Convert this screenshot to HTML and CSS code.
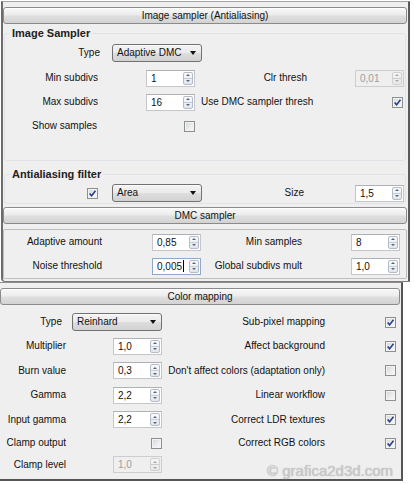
FILE: index.html
```html
<!DOCTYPE html>
<html>
<head>
<meta charset="utf-8">
<link rel="stylesheet" href="styles.css">
</head>
<body>
<div class="top">
  <div class="rollhead">Image sampler (Antialiasing)</div>

  <fieldset class="grp g1">
    <legend>Image Sampler</legend>
    <div class="row is r-type">
      <span class="lbl c1 type-lbl">Type</span>
      <div class="combo is-combo"><span>Adaptive DMC</span><i class="dd"></i></div>
    </div>
    <div class="row is r24 first">
      <span class="lbl c1">Min subdivs</span>
      <span class="spin c3"><span class="val">1</span><span class="arr"><i class="u"></i><i class="d"></i></span></span>
      <span class="lbl c5 right">Clr thresh</span>
      <span class="spin dis c7"><span class="val">0,01</span><span class="arr"><i class="u"></i><i class="d"></i></span></span>
    </div>
    <div class="row is r24">
      <span class="lbl c1">Max subdivs</span>
      <span class="spin c3"><span class="val">16</span><span class="arr"><i class="u"></i><i class="d"></i></span></span>
      <span class="lbl c5 left">Use DMC sampler thresh</span>
      <span class="cb on c7 end"><svg viewBox="0 0 9 9" width="9" height="9"><path d="M1.6 4.4l2 2.3 3.9-5" fill="none" stroke="#263a8c" stroke-width="1.5"/></svg></span>
    </div>
    <div class="row is r24">
      <span class="lbl c1 shift1">Show samples</span>
      <span class="cb c3 end"></span>
    </div>
  </fieldset>

  <fieldset class="grp g2">
    <legend>Antialiasing filter</legend>
    <div class="row is r-filter">
      <span class="cb on c1 end"><svg viewBox="0 0 9 9" width="9" height="9"><path d="M1.6 4.4l2 2.3 3.9-5" fill="none" stroke="#263a8c" stroke-width="1.5"/></svg></span>
      <div class="combo is-combo"><span>Area</span><i class="dd"></i></div>
      <span class="lbl c5 right size-lbl">Size</span>
      <span class="spin c7"><span class="val">1,5</span><span class="arr"><i class="u"></i><i class="d"></i></span></span>
    </div>
  </fieldset>

  <div class="rollhead dmc-head">DMC sampler</div>
  <div class="dmcbox">
    <div class="row dm r24">
      <span class="lbl c1">Adaptive amount</span>
      <span class="spin c3"><span class="val">0,85</span><span class="arr"><i class="u"></i><i class="d"></i></span></span>
      <span class="lbl c4 right">Min samples</span>
      <span class="spin c6"><span class="val">8</span><span class="arr"><i class="u"></i><i class="d"></i></span></span>
    </div>
    <div class="row dm r24">
      <span class="lbl c1">Noise threshold</span>
      <span class="spin focus c3"><span class="val">0,005<b class="caret"></b></span><span class="arr"><i class="u"></i><i class="d"></i></span></span>
      <span class="lbl c4 right">Global subdivs mult</span>
      <span class="spin c6"><span class="val">1,0</span><span class="arr"><i class="u"></i><i class="d"></i></span></span>
    </div>
  </div>
</div>

<div class="cm">
  <div class="rollhead cm-head">Color mapping</div>
  <div class="cmgrid">
    <div class="row cg h24">
      <span class="lbl c1 cm-type">Type</span>
      <div class="combo cm-combo"><span>Reinhard</span><i class="dd"></i></div>
      <span class="lbl c4 right">Sub-pixel mapping</span>
      <span class="cb on c6"><svg viewBox="0 0 9 9" width="9" height="9"><path d="M1.6 4.4l2 2.3 3.9-5" fill="none" stroke="#263a8c" stroke-width="1.5"/></svg></span>
    </div>
    <div class="row cg h24">
      <span class="lbl c1">Multiplier</span>
      <span class="spin c3"><span class="val">1,0</span><span class="arr"><i class="u"></i><i class="d"></i></span></span>
      <span class="lbl c4 right">Affect background</span>
      <span class="cb on c6"><svg viewBox="0 0 9 9" width="9" height="9"><path d="M1.6 4.4l2 2.3 3.9-5" fill="none" stroke="#263a8c" stroke-width="1.5"/></svg></span>
    </div>
    <div class="row cg h25">
      <span class="lbl c1">Burn value</span>
      <span class="spin c3"><span class="val">0,3</span><span class="arr"><i class="u"></i><i class="d"></i></span></span>
      <span class="lbl c4 right">Don't affect colors (adaptation only)</span>
      <span class="cb c6"></span>
    </div>
    <div class="row cg h24">
      <span class="lbl c1">Gamma</span>
      <span class="spin c3"><span class="val">2,2</span><span class="arr"><i class="u"></i><i class="d"></i></span></span>
      <span class="lbl c4 right">Linear workflow</span>
      <span class="cb c6"></span>
    </div>
    <div class="row cg h25">
      <span class="lbl c1">Input gamma</span>
      <span class="spin c3"><span class="val">2,2</span><span class="arr"><i class="u"></i><i class="d"></i></span></span>
      <span class="lbl c4 right">Correct LDR textures</span>
      <span class="cb on c6"><svg viewBox="0 0 9 9" width="9" height="9"><path d="M1.6 4.4l2 2.3 3.9-5" fill="none" stroke="#263a8c" stroke-width="1.5"/></svg></span>
    </div>
    <div class="row cg h22">
      <span class="lbl c1">Clamp output</span>
      <span class="cb c3 end"></span>
      <span class="lbl c4 right">Correct RGB colors</span>
      <span class="cb on c6"><svg viewBox="0 0 9 9" width="9" height="9"><path d="M1.6 4.4l2 2.3 3.9-5" fill="none" stroke="#263a8c" stroke-width="1.5"/></svg></span>
    </div>
    <div class="row cg h21">
      <span class="lbl c1">Clamp level</span>
      <span class="spin dis c3"><span class="val">1,0</span><span class="arr"><i class="u"></i><i class="d"></i></span></span>
    </div>
  </div>
</div>

<div class="watermark">© grafica2d3d.com</div>
</body>
</html>
```

FILE: styles.css
```css
html, body {
  margin: 0;
  padding: 0;
  background: #ffffff;
}
body {
  font-family: "Liberation Sans", Arial, sans-serif;
  font-size: 10px;
  color: #111;
  width: 414px;
  height: 484px;
  overflow: hidden;
}

/* ---------- panels ---------- */
.top {
  margin-top: 1px;
  margin-left: 1px;
  width: 409px;
  box-sizing: border-box;
  border-top: 1px solid #a3a3a3;
  border-left: 2px solid #6c6c6c;
  border-right: 2px solid #5a5a5a;
  border-bottom: 1px solid #7c7c7c;
  border-bottom-left-radius: 4px;
  background: #efefef;
  padding: 5px 0 2px 0;
}

.rollhead {
  height: 17px;
  box-sizing: border-box;
  border: 1px solid #8b8b8b;
  border-radius: 3px;
  background: linear-gradient(#f8f8f8 0%, #ececec 45%, #dedede 55%, #d3d3d3 100%);
  box-shadow: inset 0 1px 0 #ffffff;
  text-align: center;
  line-height: 15px;
  font-size: 10px;
  color: #111;
  margin-right: 1px;
}

.grp {
  margin: 2px 2px 0 1px;
  padding: 0 0 22px 0;
  border: 1px solid #e0e3e7;
  border-radius: 3px;
  min-width: 0;
}
.grp legend {
  margin-left: 5px;
  padding: 0 2px;
  font-weight: bold;
  font-size: 11px;
  line-height: 14px;
  color: #222;
}
.g2 {
  margin-top: 6px;
  padding-bottom: 1px;
}

.dmc-head { margin-top: 3px; }
.dmcbox {
  margin: 5px 1px 0 0;
  border: 1px solid #bdbdbd;
  border-radius: 2px;
}

.cm {
  margin-left: -6px;
  width: 409px;
  box-sizing: border-box;
  border-top: 1px solid #8e8e8e;
  border-right: 2px solid #555;
  border-bottom: 2px solid #555;
  background: #efefef;
  padding: 5px 0 4px 0;
}
.cm-head { margin: 0 1px 0 6px; }
.cmgrid { margin: 5px 0 0 6px; }

/* ---------- rows ---------- */
.row {
  display: grid;
  align-items: center;
}
.is { grid-template-columns: 93px 48px 49px 6px 106px 48px 49px; }
.dm { grid-template-columns: 98px 50px 49px 101px 49px 49px; }
.cg { grid-template-columns: 66px 47px 49px 163px 60px 11px; }

.r-type { height: 22px; margin-top: 2px; }
.r24 { height: 24px; }
.first { margin-top: 2px; }
.r-filter { height: 18px; margin-top: 3px; }
.h24 { height: 24px; }
.h25 { height: 25px; }
.h22 { height: 22px; }
.h21 { height: 21px; }

.c1 { grid-column: 1; grid-row: 1; }
.c3 { grid-column: 3; grid-row: 1; }
.c4 { grid-column: 4; grid-row: 1; }
.c5 { grid-column: 5; grid-row: 1; }
.c6 { grid-column: 6; grid-row: 1; }
.c7 { grid-column: 7; grid-row: 1; }

.lbl {
  white-space: nowrap;
  line-height: 12px;
}
.c1.lbl { justify-self: end; }
.right { justify-self: end; }
.left { grid-column: 5 / 7; justify-self: start; }
.end { justify-self: end; }
.type-lbl { margin-right: -2px; }
.shift1 { margin-right: 1px; }
.size-lbl { margin-right: 3px; }
.cm-type { margin-right: 4px; }
.c7.end { margin-right: 1px; }

/* ---------- combo ---------- */
.combo {
  display: flex;
  align-items: center;
  width: 90px;
  height: 18px;
  box-sizing: border-box;
  border: 1px solid #717171;
  border-radius: 3px;
  background: linear-gradient(#f3f3f3 0%, #ebebeb 48%, #dddddd 52%, #d2d2d2 100%);
  box-shadow: inset 0 1px 0 #fbfbfb;
  padding-left: 4px;
  color: #111;
  line-height: 12px;
}
.is-combo {
  grid-column: 2 / 5;
  grid-row: 1;
  margin-left: 14px;
}
.cm-combo {
  grid-column: 2 / 4;
  grid-row: 1;
  margin-left: 6px;
}
.dd {
  margin-left: auto;
  margin-right: 5px;
  width: 0;
  height: 0;
  border-left: 3px solid transparent;
  border-right: 3px solid transparent;
  border-top: 4px solid #111;
}

/* ---------- spinner ---------- */
.spin {
  display: flex;
  width: 49px;
  height: 17px;
  box-sizing: border-box;
  border: 1px solid #c4c6c9;
  border-top-color: #aeb1b5;
  background: #ffffff;
  color: #111;
}
.spin .val {
  flex: 1;
  padding-left: 4px;
  line-height: 15px;
  white-space: nowrap;
  display: flex;
  align-items: center;
}
.arr {
  width: 10px;
  margin: 1px 1px 1px 0;
  display: flex;
  flex-direction: column;
  box-sizing: border-box;
  border: 1px solid #b3bcc8;
  border-radius: 2px;
  background: linear-gradient(#fafbfc, #e2e6eb);
}
.arr i {
  flex: 1;
  display: flex;
  align-items: center;
  justify-content: center;
}
.arr i + i { border-top: 1px solid #c7cdd5; }
.arr .u::before {
  content: "";
  border-left: 2px solid transparent;
  border-right: 2px solid transparent;
  border-bottom: 2px solid #4f6688;
}
.arr .d::before {
  content: "";
  border-left: 2px solid transparent;
  border-right: 2px solid transparent;
  border-top: 2px solid #4f6688;
}
.spin.dis {
  background: #efefef;
  border-color: #cdcdcd;
  color: #9c9c9c;
}
.spin.dis .arr {
  border-color: #d0d0d0;
  background: linear-gradient(#f5f5f5, #e8e8e8);
}
.spin.dis .arr .u::before { border-bottom-color: #a8a8a8; }
.spin.dis .arr .d::before { border-top-color: #a8a8a8; }
.spin.focus { border-color: #8fa9c8; }
.caret {
  display: inline-block;
  width: 1px;
  height: 12px;
  background: #000;
  margin-left: 1px;
}

/* ---------- checkbox ---------- */
.cb {
  display: flex;
  align-items: center;
  justify-content: center;
  width: 11px;
  height: 11px;
  box-sizing: border-box;
  border: 1px solid #8e8f8f;
  background: linear-gradient(135deg, #d3d6da 0%, #eceef0 60%, #fafafa 100%);
  box-shadow: inset 0 0 0 1px #f3f3f3;
}
.cb svg { display: block; }

/* ---------- watermark ---------- */
.watermark {
  position: absolute;
  left: 267px;
  top: 462px;
  font-family: "Liberation Sans", Arial, sans-serif;
  font-size: 15px;
  line-height: 17px;
  color: #cbcbcb;
  text-shadow: 0 0 1px #a9a9a9;
  white-space: nowrap;
}
```
